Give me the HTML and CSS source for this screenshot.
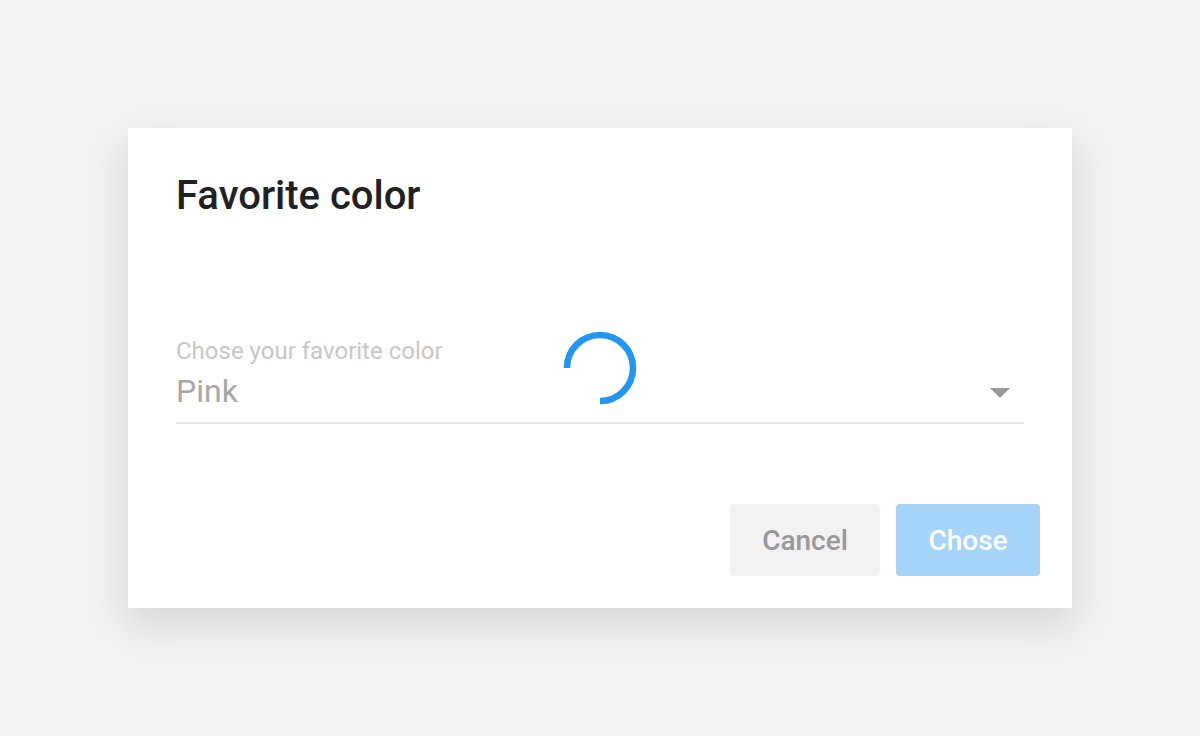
FILE: index.html
```html
<!DOCTYPE html>
<html>
<head>
<meta charset="utf-8">
<link rel="stylesheet" href="styles.css">
</head>
<body>
<div class="page">
  <div class="dialog">
    <div class="content">
      <h1 class="title">Favorite color</h1>
      <div class="field">
        <div class="label">Chose your favorite color</div>
        <div class="select">
          <span class="value">Pink</span>
          <span class="arrow"></span>
        </div>
        <svg class="spinner" width="76" height="76" viewBox="0 0 76 76">
          <path d="M 5 38 A 33 33 0 1 1 38 71" fill="none" stroke="#2196f3" stroke-width="6.5"/>
        </svg>
      </div>
    </div>
    <div class="actions">
      <button class="btn btn-cancel">Cancel</button>
      <button class="btn btn-primary">Chose</button>
    </div>
  </div>
</div>
</body>
</html>
```
FILE: styles.css
```css
html, body {
  margin: 0;
  padding: 0;
  background: #f2f2f2;
  font-family: Roboto, "Liberation Sans", sans-serif;
}
.page {
  width: 1200px;
  height: 736px;
  display: flex;
  align-items: center;
  justify-content: center;
}
.dialog {
  width: 944px;
  height: 480px;
  background: #fff;
  box-shadow: 0 16px 40px rgba(0,0,0,0.12);
  box-sizing: border-box;
  display: flex;
  flex-direction: column;
}
.content {
  padding: 44px 48px 0 48px;
  flex: 1;
}
.title {
  margin: 0;
  font-size: 40px;
  font-weight: 500;
  color: #212121;
  line-height: 48px;
}
.field {
  position: relative;
  margin-top: 117px;
}
.label {
  font-size: 24px;
  color: #c8c8c8;
  line-height: 28px;
}
.select {
  display: flex;
  align-items: center;
  justify-content: space-between;
  border-bottom: 2px solid #e6e6e6;
  padding: 6px 0 11px 0;
}
.value {
  font-size: 32px;
  color: #a8a8a8;
  line-height: 40px;
}
.arrow {
  width: 0;
  height: 0;
  border-left: 10px solid transparent;
  border-right: 10px solid transparent;
  border-top: 10px solid #999;
  margin: 4px 14px 0 0;
}
.spinner {
  position: absolute;
  left: 386px;
  top: -7px;
}
.actions {
  display: flex;
  justify-content: flex-end;
  gap: 16px;
  padding: 0 32px 32px 0;
}
.btn {
  height: 72px;
  border: none;
  border-radius: 4px;
  font-family: Roboto, "Liberation Sans", sans-serif;
  font-size: 28px;
  font-weight: 500;
}
.btn-cancel {
  width: 150px;
  background: #f2f2f2;
  color: #999;
}
.btn-primary {
  width: 144px;
  background: #a6d5f9;
  color: #fff;
}
```
